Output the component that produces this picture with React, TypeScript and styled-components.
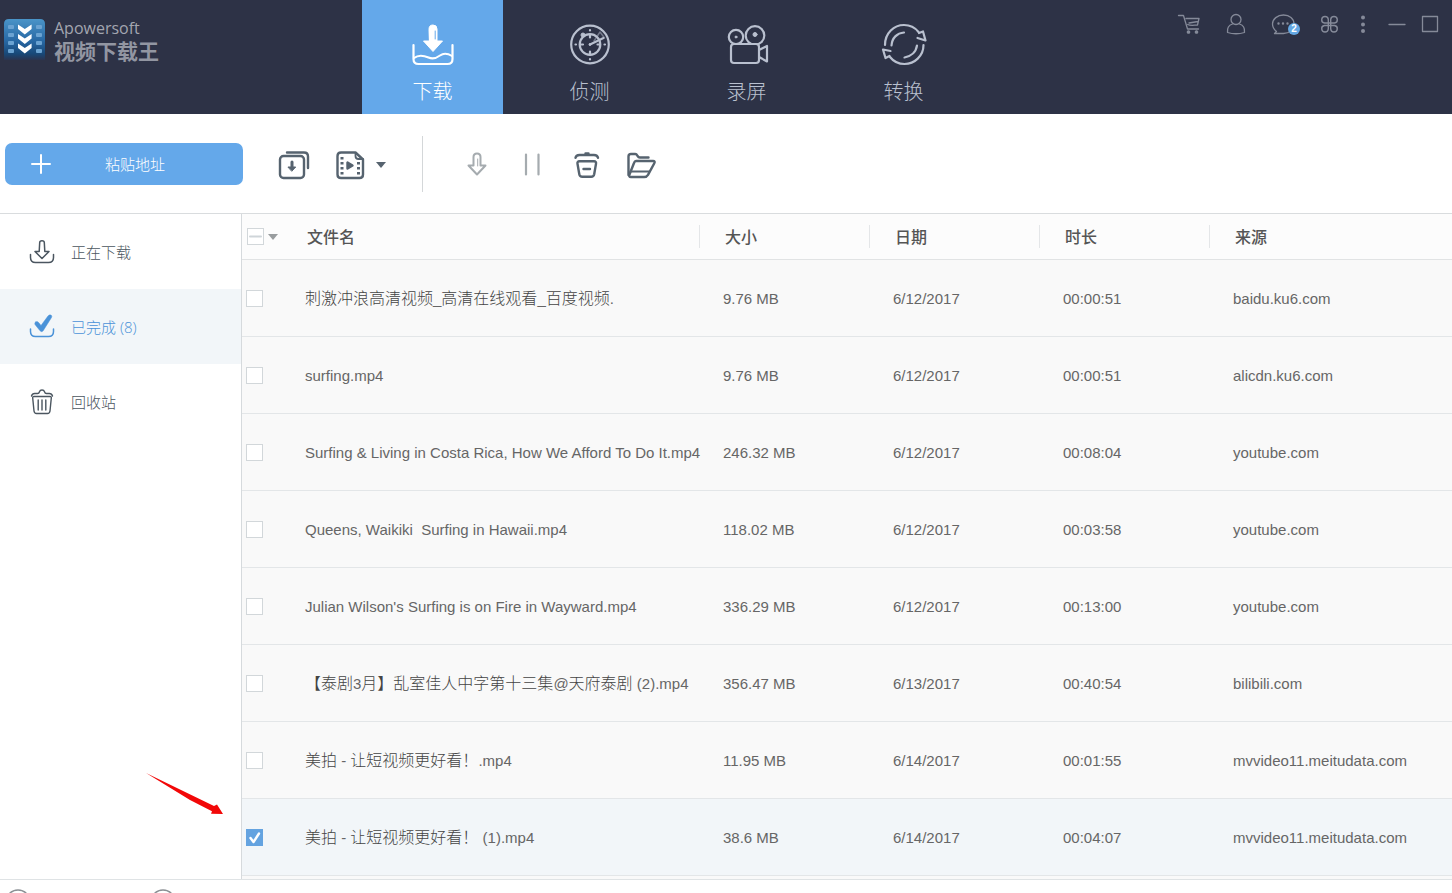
import React, { useState } from "react";
import styled, { createGlobalStyle } from "styled-components";

const latin = `"Liberation Sans", "Noto Sans CJK SC", sans-serif`;
const han = `"Noto Sans CJK SC", "Liberation Sans", sans-serif`;
const humanist = `"Open Sans", "Noto Sans CJK SC", sans-serif`;

const GlobalStyle = createGlobalStyle`
  *, *::before, *::after { box-sizing: border-box; }
  body { margin: 0; background: #fff; font-family: ${latin}; font-size: 15px; color: #666; }
  button { font: inherit; color: inherit; border: 0; padding: 0; background: none; cursor: pointer; }
  svg { display: block; fill: none; stroke: currentColor; stroke-linecap: round; stroke-linejoin: round; flex: none; }
`;

const Page = styled.div`
  display: flex;
  flex-direction: column;
  height: 100vh;
  overflow: hidden;
`;

const Header = styled.header`
  display: flex;
  flex: none;
  height: 114px;
  background: #2d3246;
  color: #b5bccb;
`;

const Brand = styled.div`
  display: flex;
  gap: 9px;
  width: 362px;
  padding: 18px 0 0 4px;
`;

const BrandText = styled.div`
  display: flex;
  flex-direction: column;
`;

const BrandName = styled.span`
  font: 400 16px/20px "Open Sans", sans-serif;
  color: #a3a6b0;
`;

const BrandTitle = styled.span`
  font: 700 21px/24px ${han};
  color: #9296a2;
`;

const Tabs = styled.nav`
  display: flex;
  gap: 16px;
`;

const Tab = styled.button<{ $active?: boolean }>`
  display: flex;
  flex-direction: column;
  align-items: center;
  gap: 9px;
  width: 141px;
  padding-top: 20px;
  font: 300 20px/28px ${han};
  background: ${(p) => (p.$active ? "#64a8ea" : "transparent")};
  color: ${(p) => (p.$active ? "#fff" : "#b9c0cf")};
`;

const WindowBar = styled.div`
  display: flex;
  gap: 9px;
  margin-left: auto;
  padding: 12px 9px 0 0;
  color: #858a99;
`;

const IconGroup = styled.div<{ $gap: number }>`
  display: flex;
  align-items: flex-start;
  gap: ${(p) => p.$gap}px;
`;

const WindowButton = styled.button`
  position: relative;
  width: 24px;
  height: 24px;
`;

const Badge = styled.span`
  position: absolute;
  right: -5px;
  bottom: 1px;
  width: 12px;
  height: 12px;
  border-radius: 50%;
  background: #64a8e4;
  color: #fff;
  font: 700 10px/12px ${latin};
  text-align: center;
`;

const Toolbar = styled.div`
  display: flex;
  flex: none;
  align-items: center;
  height: 100px;
  padding: 0 5px;
  border-bottom: 1px solid #d9dcde;
  color: #56636f;
`;

const PasteButton = styled.button`
  display: flex;
  align-items: center;
  gap: 54px;
  width: 238px;
  height: 42px;
  padding-left: 26px;
  border-radius: 7px;
  background: #64a8ea;
  color: #fff;
  font: 300 15px/20px ${han};
`;

const ToolGroup = styled.div<{ $gap: number }>`
  display: flex;
  align-items: center;
  gap: ${(p) => p.$gap}px;
  margin-left: 35px;
`;

const ToolButton = styled.button<{ $muted?: boolean }>`
  display: flex;
  align-items: center;
  gap: 10px;
  height: 34px;
  padding-top: 2px;
  color: ${(p) => (p.$muted ? "#a5abaf" : "inherit")};
`;

const Divider = styled.span`
  width: 1px;
  height: 56px;
  margin: 0 3px 0 36px;
  background: #d4d7d9;
`;

const Main = styled.main`
  display: flex;
  flex: 1;
  min-height: 0;
`;

const Sidebar = styled.aside`
  position: relative;
  flex: none;
  width: 242px;
  border-right: 1px solid #d6dadd;
`;

const SideItem = styled.button<{ $active?: boolean }>`
  display: flex;
  align-items: center;
  gap: 15px;
  width: 100%;
  height: 75px;
  padding: 0 0 0 28px;
  font: 300 15px/20px ${humanist};
  background: ${(p) => (p.$active ? "#f2f6f9" : "transparent")};
  color: ${(p) => (p.$active ? "#4a92d8" : "#4b5660")};
`;

const Pointer = styled.svg`
  position: absolute;
  right: 17px;
  bottom: 63px;
`;

const Content = styled.section`
  flex: 1;
  min-width: 0;
  overflow: hidden;
  background: #f9f9f9;
`;

const Table = styled.table`
  width: 100%;
  table-layout: fixed;
  border-collapse: separate;
  border-spacing: 0;
`;

const Col = styled.col<{ $width?: number }>`
  width: ${(p) => (p.$width ? `${p.$width}px` : "auto")};
`;

const HeadCell = styled.th`
  height: 46px;
  padding: 0;
  background: #fcfcfc;
  border-bottom: 1px solid #e1e3e4;
  text-align: left;
`;

const HeadLabel = styled.div<{ $line?: boolean }>`
  height: 23px;
  padding-left: 25px;
  border-left: ${(p) => (p.$line ? "1px solid #e4e6e8" : "0")};
  font: 500 16px/22px ${han};
  color: #555;
`;

const SelectAll = styled.div`
  display: flex;
  align-items: center;
  gap: 4px;
  padding-left: 5px;
  color: #999d9f;
`;

const Row = styled.tr<{ $selected: boolean }>`
  background: ${(p) => (p.$selected ? "#f2f6f9" : "#f9f9f9")};
`;

const Cell = styled.td`
  height: 77px;
  padding: 2px 0 0 24px;
  border-bottom: 1px solid #e3e6e8;
  white-space: pre;
  line-height: 20px;
`;

const NameCell = styled(Cell)`
  padding-left: 23px;
`;

const CheckCell = styled(Cell)`
  padding: 0 0 0 4px;
`;

const Han = styled.span`
  font: 300 16px/16px ${han};
  color: #444;
`;

const CheckWrap = styled.label`
  display: grid;
  width: 17px;
  height: 17px;

  & > * { grid-area: 1 / 1; }
  & > svg { pointer-events: none; }
`;

const Check = styled.input`
  appearance: none;
  width: 17px;
  height: 17px;
  margin: 0;
  border: 1px solid #d2d7da;
  background: #fff;

  &:checked {
    border-color: #64a3e0;
    background: #64a3e0;
  }
`;

const Footer = styled.footer`
  display: flex;
  flex: none;
  gap: 119px;
  height: 14px;
  padding: 9px 0 0 5px;
  overflow: hidden;
  border-top: 1px solid #dfe3e5;
  color: #8b9094;
`;

const Logo = () => (
  <svg width="41" height="42" viewBox="0 0 41 42" aria-hidden="true">
    <defs>
      <linearGradient id="logo" x1="0" y1="0" x2="0" y2="1">
        <stop offset="0" stopColor="#4a94c8" />
        <stop offset="0.55" stopColor="#2767a3" />
        <stop offset="0.85" stopColor="#184878" />
        <stop offset="1" stopColor="#2b3450" />
      </linearGradient>
    </defs>
    <g stroke="none">
      <path d="M5 1h31q5 0 5 5v36H0V6q0-5 5-5z" fill="url(#logo)" />
      <g fill="#6ba3d2">
        {[7, 15, 23, 31].map((y) => (
          <React.Fragment key={y}>
            <rect x="4" y={y} width="6" height="4" rx="1" />
            <rect x="32" y={y} width="6" height="4" rx="1" />
          </React.Fragment>
        ))}
      </g>
      <g fill="#fff">
        {[6.5, 16, 25.5].map((y) => (
          <path key={y} d={`M14 ${y}l6.800 4.500 6.800-4.500v4.500l-6.800 5.500-6.800-5.500z`} />
        ))}
      </g>
    </g>
  </svg>
);

const DownloadIcon = () => (
  <svg width="48" height="48" viewBox="0 0 48 48" strokeWidth="2" aria-hidden="true">
    <path d="M4.500 25v14q0 5 5 5h29q5 0 5-5V25" strokeWidth="2.200" />
    <path d="M5 38c5-4 10-2.500 14.500-.5s7.500 1 11.500-2 8-2 12 .5" />
    <path d="M20 9q0-4 4-4t4 4v12h5.500L24 31.500 14.500 21H20z" fill="currentColor" strokeWidth="1" />
    <path d="M26.200 11v8" stroke="#64a8ea" strokeWidth="1" />
  </svg>
);

const DetectIcon = () => (
  <svg width="48" height="48" viewBox="0 0 48 48" strokeWidth="2.200" aria-hidden="true">
    <circle cx="24" cy="24.500" r="18.800" />
    <circle cx="24" cy="24.500" r="10.300" />
    <path d="M24 10v.5M24 39v.5M9.500 24.500h.5M38.500 24.500h.5M24 15v2.500M24 31.500v3M14.500 24.500h2.500M31.500 24.500h2.500" />
    <path d="M24 24.500L37.500 18" strokeWidth="2" />
    <path d="M28 21l6-9 4.500 6" strokeWidth="1.500" opacity=".5" />
    <circle cx="17" cy="15" r="2" fill="currentColor" strokeWidth="1" />
    <circle cx="24" cy="24.500" r="1" fill="currentColor" strokeWidth="1" />
  </svg>
);

const CameraIcon = () => (
  <svg width="48" height="48" viewBox="0 0 48 48" strokeWidth="2.200" aria-hidden="true">
    <circle cx="13" cy="17" r="7.200" />
    <circle cx="32" cy="15.500" r="9.300" />
    <circle cx="13" cy="17" r="1" fill="currentColor" strokeWidth="1" />
    <circle cx="32" cy="14.500" r="2" fill="currentColor" strokeWidth="1" />
    <rect x="8" y="24" width="28" height="19" rx="3" fill="#2d3246" />
    <path d="M37 29.500l7-3.500v15.500l-7-4" />
  </svg>
);

const ConvertIcon = () => (
  <svg width="48" height="48" viewBox="0 0 48 48" strokeWidth="2.200" aria-hidden="true">
    <path d="M5 25C5 13 14 5 24 5c6 0 11 2.500 14.500 7" />
    <path d="M43.500 25C43.500 36 34.500 44 24.500 44c-6 0-11-2.500-14.500-7" />
    <path d="M39 13l4-1.500 2.500 9-8-2.500M9.500 36l-4 2L3 29.500l7.500 1.500" />
    <path d="M11.500 25.500C12 18 17 13 24 12.500M37 25.500C36 32 31 36.500 24.500 37.500" />
  </svg>
);

const CartIcon = () => (
  <svg width="24" height="24" viewBox="0 0 24 24" strokeWidth="1.300" aria-hidden="true">
    <path d="M1.500 3.500h5L10.500 17h11M9 6.500h13l-1.500 6.500c-4 .2-7 1-9.800-.5M12 11l9-1.500" />
    <circle cx="11.500" cy="20" r="1.200" fill="currentColor" />
    <circle cx="19.500" cy="20" r="1.200" fill="currentColor" />
  </svg>
);

const UserIcon = () => (
  <svg width="24" height="24" viewBox="0 0 24 24" strokeWidth="1.300" aria-hidden="true">
    <circle cx="12" cy="7.500" r="5" />
    <path d="M8.500 12C5 13 3 16 3.500 20.500Q12 23 20.500 20.500C21 16 19 13 15.500 12" />
  </svg>
);

const ChatIcon = () => (
  <svg width="24" height="24" viewBox="0 0 24 24" strokeWidth="1.300" aria-hidden="true">
    <path d="M3.500 21.500h9c6 0 10.500-4 10.500-9.500S18.500 3 12.500 3 1.500 7 1.500 12c0 3 1.500 5.500 4 7.500z" />
    <path d="M7.500 11.500h.01M12 11.500h.01M16.500 11.500h.01" strokeWidth="2.400" />
  </svg>
);

const CloverIcon = () => (
  <svg width="24" height="24" viewBox="0 0 24 24" strokeWidth="1.400" aria-hidden="true">
    <path d="M10.300 11H6.500A3.300 3.300 0 1 1 10.300 7.500V17A3.300 3.300 0 1 1 6.500 13.500H16.500A3.300 3.300 0 1 1 12.700 17V7.500A3.300 3.300 0 1 1 16.500 11z" />
  </svg>
);

const MoreIcon = () => (
  <svg width="24" height="24" viewBox="0 0 24 24" aria-hidden="true">
    <g fill="currentColor" stroke="none">
      <circle cx="12" cy="5.500" r="2" />
      <circle cx="12" cy="12.500" r="2" />
      <circle cx="12" cy="19" r="2" />
    </g>
  </svg>
);

const MinimizeIcon = () => (
  <svg width="24" height="24" viewBox="0 0 24 24" strokeWidth="1.300" aria-hidden="true">
    <path d="M4 12.500h16" />
  </svg>
);

const MaximizeIcon = () => (
  <svg width="24" height="24" viewBox="0 0 24 24" strokeWidth="1.300" aria-hidden="true">
    <rect x="3.500" y="4.500" width="15" height="15" />
  </svg>
);

const PlusIcon = () => (
  <svg width="20" height="20" viewBox="0 0 20 20" strokeWidth="2" aria-hidden="true">
    <path d="M10 1v18M1 10h18" />
  </svg>
);

const BatchIcon = () => (
  <svg width="32" height="32" viewBox="0 0 32 32" strokeWidth="2.400" aria-hidden="true">
    <path d="M9 3.500h17q4 0 4 4V19" />
    <rect x="2" y="7" width="24" height="22" rx="3.500" />
    <path d="M14 13v6" strokeWidth="3" />
    <path d="M10.300 18h7.400L14 22z" fill="currentColor" strokeWidth="1" />
  </svg>
);

const FilmIcon = () => (
  <svg width="32" height="32" viewBox="0 0 32 32" strokeWidth="2.400" aria-hidden="true">
    <path d="M21.500 3.500H7Q3.500 3.500 3.500 7v18.500q0 3.500 3.500 3.500h18.500q3.500 0 3.500-3.500V10.500z" />
    <path d="M21.500 4v3q0 3 3 3H29" strokeWidth="1.800" />
    <path d="M13.500 13.500v6l5-3z" fill="currentColor" />
    <path d="M8 8v18M24.500 13v13" strokeWidth="3" strokeDasharray="2.500 2.500" strokeLinecap="butt" />
  </svg>
);

const Caret = () => (
  <svg width="10" height="6" viewBox="0 0 10 6" aria-hidden="true">
    <path d="M0 0h10L5 6z" fill="currentColor" stroke="none" />
  </svg>
);

const ResumeIcon = () => (
  <svg width="32" height="32" viewBox="0 0 32 32" strokeWidth="2" aria-hidden="true">
    <path d="M12.500 8q0-3.500 3.500-3.500T19.500 8v8.500h5L16 25.500 7.500 16.500h5z" />
    <path d="M16.700 10v7" strokeWidth="1" />
  </svg>
);

const PauseIcon = () => (
  <svg width="32" height="32" viewBox="0 0 32 32" strokeWidth="2.200" aria-hidden="true">
    <path d="M10 5.500v20M22.500 5.500v20" />
  </svg>
);

const BinIcon = () => (
  <svg width="32" height="32" viewBox="0 0 32 32" strokeWidth="2.400" aria-hidden="true">
    <path d="M4.500 8.800q.5-2.800 4-2.800h14.500q3.500 0 4 2.800M14.500 4.500h3" />
    <path d="M8.500 12.300h14.500q2.500 0 2 2.500l-1.800 10.500q-.5 2.500-3 2.500h-8.900q-2.500 0-3-2.500L6.500 14.800q-.5-2.500 2-2.500zM12.500 20h6.500" />
  </svg>
);

const FolderIcon = () => (
  <svg width="32" height="32" viewBox="0 0 32 32" strokeWidth="2.400" aria-hidden="true">
    <path d="M2.500 26V7.500Q2.500 5 5 5h4.200q1.300 0 2.300 1.800t2.500 1.700h8.500" />
    <path d="M10 12h17q2.500 0 1.300 2.300L22 25.800q-1.300 2.200-3.800 2.200H5q-2.500 0-1.500-2.500L8 14q.7-2 2-2z" />
    <path d="M4.500 22.500h18.500" strokeWidth="2" />
  </svg>
);

const SideDownloadIcon = () => (
  <svg width="28" height="28" viewBox="0 0 28 28" strokeWidth="1.500" aria-hidden="true">
    <path d="M2.500 16.500v3q0 5 5 5h13q5 0 5-5v-3" />
    <path d="M11.200 13.500l.5-9q0-1.800 2.300-1.800t2.300 1.800l.5 9h4.200L14 20.500 7 13.500z" />
  </svg>
);

const SideDoneIcon = () => (
  <svg width="28" height="28" viewBox="0 0 28 28" strokeWidth="1.500" aria-hidden="true">
    <path d="M2.500 16v2.500q0 5 5 5h13q5 0 5-5V16" />
    <path d="M7.500 9q2-1.500 3.500 1l2 2.500L20 3q2-2 3.500-.5.800 1-.3 2.500L15 18q-1.800 1.500-3.200-.5L7 11.500q-.7-1.500.5-2.500z" fill="currentColor" strokeWidth=".5" />
  </svg>
);

const SideBinIcon = () => (
  <svg width="28" height="28" viewBox="0 0 28 28" strokeWidth="1.400" aria-hidden="true">
    <path d="M3.500 8q.7-2.500 3.200-2.500h2.800q1.500 0 2-1.800.5-1.700 2.500-1.700t2.500 1.700q.5 1.800 2 1.800h2.800q2.500 0 3.200 2.500M6 8.500h16q1.500 0 1.300 1.500l-1.300 13q-.3 2.500-2.500 2.500h-11Q6.300 25.500 6 23L4.700 10Q4.500 8.500 6 8.500zM10.200 12v10M14 12v10M17.800 12v10" />
  </svg>
);

const RoundIcon = () => (
  <svg width="26" height="26" viewBox="0 0 26 26" strokeWidth="1.500" aria-hidden="true">
    <circle cx="13" cy="13" r="12" />
  </svg>
);

const tabs = [
  { label: "下载", icon: <DownloadIcon /> },
  { label: "侦测", icon: <DetectIcon /> },
  { label: "录屏", icon: <CameraIcon /> },
  { label: "转换", icon: <ConvertIcon /> },
];

const files = [
  ["刺激冲浪高清视频_高清在线观看_百度视频.", "9.76 MB", "6/12/2017", "00:00:51", "baidu.ku6.com"],
  ["surfing.mp4", "9.76 MB", "6/12/2017", "00:00:51", "alicdn.ku6.com"],
  ["Surfing & Living in Costa Rica, How We Afford To Do It.mp4", "246.32 MB", "6/12/2017", "00:08:04", "youtube.com"],
  ["Queens, Waikiki  Surfing in Hawaii.mp4", "118.02 MB", "6/12/2017", "00:03:58", "youtube.com"],
  ["Julian Wilson's Surfing is on Fire in Wayward.mp4", "336.29 MB", "6/12/2017", "00:13:00", "youtube.com"],
  ["【泰剧3月】乱室佳人中字第十三集@天府泰剧 (2).mp4", "356.47 MB", "6/13/2017", "00:40:54", "bilibili.com"],
  ["美拍 - 让短视频更好看！.mp4", "11.95 MB", "6/14/2017", "00:01:55", "mvvideo11.meitudata.com"],
  ["美拍 - 让短视频更好看！ (1).mp4", "38.6 MB", "6/14/2017", "00:04:07", "mvvideo11.meitudata.com"],
];

/* Chinese runs are set one step larger than the Latin text around them. */
const FileName = ({ text }: { text: string }) => (
  <>
    {text
      .split(/([\u3000-\u9fff\uff00-\uffef]+)/)
      .map((part, i) => (i % 2 ? <Han key={i}>{part}</Han> : part))}
  </>
);

export default function App() {
  const [selected, setSelected] = useState<number[]>([7]);
  const toggle = (i: number) =>
    setSelected((s) => (s.includes(i) ? s.filter((n) => n !== i) : [...s, i]));

  return (
    <Page>
      <GlobalStyle />
      <Header>
        <Brand>
          <Logo />
          <BrandText>
            <BrandName>Apowersoft</BrandName>
            <BrandTitle>视频下载王</BrandTitle>
          </BrandText>
        </Brand>
        <Tabs>
          {tabs.map((t, i) => (
            <Tab key={t.label} $active={i === 0}>
              {t.icon}
              {t.label}
            </Tab>
          ))}
        </Tabs>
        <WindowBar>
          <IconGroup $gap={23}>
            <WindowButton aria-label="购物车"><CartIcon /></WindowButton>
            <WindowButton aria-label="用户"><UserIcon /></WindowButton>
            <WindowButton aria-label="消息"><ChatIcon /><Badge>2</Badge></WindowButton>
            <WindowButton aria-label="工具"><CloverIcon /></WindowButton>
          </IconGroup>
          <IconGroup $gap={10}>
            <WindowButton aria-label="更多"><MoreIcon /></WindowButton>
            <WindowButton aria-label="最小化"><MinimizeIcon /></WindowButton>
            <WindowButton aria-label="最大化"><MaximizeIcon /></WindowButton>
          </IconGroup>
        </WindowBar>
      </Header>

      <Toolbar>
        <PasteButton><PlusIcon />粘贴地址</PasteButton>
        <ToolGroup $gap={24}>
          <ToolButton aria-label="批量下载"><BatchIcon /></ToolButton>
          <ToolButton aria-label="格式"><FilmIcon /><Caret /></ToolButton>
        </ToolGroup>
        <Divider />
        <ToolGroup $gap={23}>
          <ToolButton $muted aria-label="继续"><ResumeIcon /></ToolButton>
          <ToolButton $muted aria-label="暂停"><PauseIcon /></ToolButton>
          <ToolButton aria-label="删除"><BinIcon /></ToolButton>
          <ToolButton aria-label="打开文件夹"><FolderIcon /></ToolButton>
        </ToolGroup>
      </Toolbar>

      <Main>
        <Sidebar>
          <SideItem><SideDownloadIcon />正在下载</SideItem>
          <SideItem $active><SideDoneIcon />已完成 (8)</SideItem>
          <SideItem><SideBinIcon />回收站</SideItem>
          <Pointer width="80" height="44" viewBox="0 0 80 44" aria-hidden="true">
            <path d="M2 1L70 34l3-1.500L79 42l-12-.2 1-2.600L46 28z" fill="#f20808" stroke="none" />
          </Pointer>
        </Sidebar>

        <Content>
          <Table>
            <colgroup>
              <Col $width={40} />
              <Col />
              <Col $width={170} />
              <Col $width={170} />
              <Col $width={170} />
              <Col $width={243} />
            </colgroup>
            <thead>
              <tr>
                <HeadCell>
                  <SelectAll>
                    <CheckWrap>
                      <Check type="checkbox" aria-label="全选" />
                      <svg width="17" height="17" viewBox="0 0 17 17" strokeWidth="2" aria-hidden="true">
                        <path d="M3 8.500h11" stroke="#cfd5d9" />
                      </svg>
                    </CheckWrap>
                    <Caret />
                  </SelectAll>
                </HeadCell>
                {["文件名", "大小", "日期", "时长", "来源"].map((h, i) => (
                  <HeadCell key={h}><HeadLabel $line={i > 0}>{h}</HeadLabel></HeadCell>
                ))}
              </tr>
            </thead>
            <tbody>
              {files.map(([name, ...rest], i) => (
                <Row key={name} $selected={selected.includes(i)}>
                  <CheckCell>
                    <CheckWrap>
                      <Check
                        type="checkbox"
                        aria-label={name}
                        checked={selected.includes(i)}
                        onChange={() => toggle(i)}
                      />
                      {selected.includes(i) && (
                        <svg width="17" height="17" viewBox="0 0 17 17" strokeWidth="2.400" aria-hidden="true">
                          <path d="M4.500 9l3 4L13 4.500" stroke="#fff" />
                        </svg>
                      )}
                    </CheckWrap>
                  </CheckCell>
                  <NameCell><FileName text={name} /></NameCell>
                  {rest.map((v, j) => <Cell key={j}>{v}</Cell>)}
                </Row>
              ))}
            </tbody>
          </Table>
        </Content>
      </Main>

      <Footer>
        <RoundIcon />
        <RoundIcon />
      </Footer>
    </Page>
  );
}
